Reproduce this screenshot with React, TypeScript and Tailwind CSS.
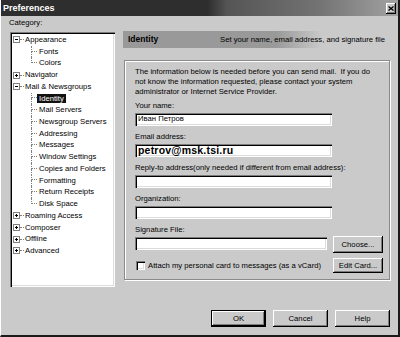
import React from "react";

type Node = { label: string; level: 0 | 1; exp?: "+" | "-"; last?: boolean; selected?: boolean };

const tree: Node[] = [
  { label: "Appearance", level: 0, exp: "-" },
  { label: "Fonts", level: 1 },
  { label: "Colors", level: 1, last: true },
  { label: "Navigator", level: 0, exp: "+" },
  { label: "Mail & Newsgroups", level: 0, exp: "-" },
  { label: "Identity", level: 1, selected: true },
  { label: "Mail Servers", level: 1 },
  { label: "Newsgroup Servers", level: 1 },
  { label: "Addressing", level: 1 },
  { label: "Messages", level: 1 },
  { label: "Window Settings", level: 1 },
  { label: "Copies and Folders", level: 1 },
  { label: "Formatting", level: 1 },
  { label: "Return Receipts", level: 1 },
  { label: "Disk Space", level: 1, last: true },
  { label: "Roaming Access", level: 0, exp: "+" },
  { label: "Composer", level: 0, exp: "+" },
  { label: "Offline", level: 0, exp: "+" },
  { label: "Advanced", level: 0, exp: "+" },
];

const raised =
  "bg-[#cacaca] shadow-[inset_-1px_-1px_0_#000,inset_1px_1px_0_#fff,inset_-2px_-2px_0_#7c7c7c]";
const sunken =
  "bg-white shadow-[inset_1px_1px_0_#7c7c7c,inset_2px_2px_0_#000,inset_-1px_-1px_0_#fff,inset_-2px_-2px_0_#dcdcdc]";

function Expander({ kind }: { kind: "+" | "-" }) {
  return (
    <svg width="7" height="7" viewBox="0 0 7 7" className="shrink-0">
      <rect x="0.5" y="0.5" width="6" height="6" fill="#fff" stroke="#808080" />
      <line x1="2" y1="3.5" x2="5" y2="3.5" stroke="#000" />
      {kind === "+" && <line x1="3.5" y1="2" x2="3.5" y2="5" stroke="#000" />}
    </svg>
  );
}

function TreeRow({ node }: { node: Node }) {
  if (node.level === 0) {
    return (
      <div className="flex h-[11.72px] items-center pl-[3px]">
        <Expander kind={node.exp ?? "+"} />
        <div className="ml-0 w-[4px] border-b border-dotted border-[#808080]" />
        <span className="ml-[1px] whitespace-nowrap">{node.label}</span>
      </div>
    );
  }
  return (
    <div className="flex h-[11.72px] items-stretch pl-[21px]">
      <div className="flex w-[6px] flex-col">
        <div className="h-1/2 border-b border-l border-dotted border-[#808080]" />
        <div className={node.last ? "flex-1" : "flex-1 border-l border-dotted border-[#808080]"} />
      </div>
      <div className="flex items-center">
        <span
          className={
            node.selected
              ? "whitespace-nowrap bg-[#111] px-[2px] leading-[9px] text-white"
              : "whitespace-nowrap px-[2px]"
          }
        >
          {node.label}
        </span>
      </div>
    </div>
  );
}

function Field({ label, value, bold }: { label: string; value?: string; bold?: boolean }) {
  return (
    <div className="mt-[6px]">
      <div className="h-[10px] whitespace-nowrap leading-[10px]">{label}</div>
      <div className={`mt-[2px] flex h-[13px] w-[197px] items-center pl-[3px] ${sunken}`}>
        <span
          className={
            bold
              ? "text-[10.5px] font-bold leading-none tracking-[0.2px]"
              : "leading-none"
          }
        >
          {value}
        </span>
      </div>
    </div>
  );
}

export default function App() {
  return (
    <div className="flex h-[337px] w-[400px] flex-col overflow-hidden border-b-2 border-l border-r-2 border-b-[#1a1a1a] border-l-white border-r-[#1a1a1a] bg-[#cacaca] font-['Liberation_Sans',Arial,sans-serif] text-[7.7px] text-black">
      {/* title bar */}
      <div className="flex h-[16px] shrink-0 items-center bg-[linear-gradient(to_right,#2e2e2e_0%,#2e2e2e_52%,#555_57%,#737373_80%,#a2a2a2_100%)] pl-[2px] pr-[2px]">
        <span className="text-[9px] font-bold leading-none text-white">Preferences</span>
        <div className={`ml-auto flex h-[11px] w-[10px] items-center justify-center ${raised}`}>
          <svg width="6" height="5" viewBox="0 0 6 5">
            <path d="M0.5 0.5 L5.5 4.5 M5.5 0.5 L0.5 4.5" stroke="#000" strokeWidth="1.3" />
          </svg>
        </div>
      </div>

      <div className="flex flex-1">
        {/* left: category tree */}
        <div className="w-[114px] shrink-0 pl-[9px]">
          <div className="ml-[-1px] mt-[2px] h-[10px] leading-[10px]">Category:</div>
          <div className={`mt-[4px] h-[255px] w-[105px] pt-[2px] ${sunken} leading-[11.72px]`}>
            {tree.map((n) => (
              <TreeRow key={n.label} node={n} />
            ))}
          </div>
        </div>

        {/* right: identity panel */}
        <div className="ml-[8px] flex flex-col">
          <div className="mt-[15px] flex h-[17px] w-[273px] items-center bg-[linear-gradient(to_right,#999_0%,#999_56%,#cacaca_73%)] pl-[5px]">
            <span className="text-[8.5px] font-bold leading-none">Identity</span>
            <span className="ml-auto mr-[11px] leading-none">Set your name, email address, and signature file</span>
          </div>

          <div className="ml-[1px] mt-[12px] h-[220px] w-[266px] border border-[#8a8a8a] pl-[10px] pt-[6px] shadow-[inset_1px_1px_0_#fff,1px_1px_0_#fff]">
            <p className="whitespace-nowrap leading-[10px]">
              The information below is needed before you can send mail.&nbsp; If you do
              <br />
              not know the information requested, please contact your system
              <br />
              administrator or Internet Service Provider.
            </p>
            <div className="-mt-[2.5px]">
              <Field label="Your name:" value="Иван Петров" />
            </div>
            <Field label="Email address:" value="petrov@msk.tsi.ru" bold />
            <Field label="Reply-to address(only needed if different from email address):" />
            <Field label="Organization:" />
            <div className="mt-[6px]">
              <div className="h-[10px] leading-[10px]">Signature File:</div>
              <div className="mt-[1.5px] flex items-start gap-[6px]">
                <div className={`mt-[0.5px] h-[13px] w-[192px] ${sunken}`} />
                <button className={`h-[17px] w-[50px] leading-none ${raised}`}>Choose...</button>
              </div>
            </div>
            <div className="mt-[5px] flex w-[248px] items-center">
              <div className={`ml-[1px] h-[9px] w-[9px] ${sunken}`} />
              <span className="ml-[3px] whitespace-nowrap">Attach my personal card to messages (as a vCard)</span>
              <button className={`ml-auto h-[15px] w-[50px] leading-none ${raised}`}>Edit Card...</button>
            </div>
          </div>
        </div>
      </div>

      {/* dialog buttons */}
      <div className="flex shrink-0 justify-end gap-[7px] pb-[8px] pr-[8px]">
        <button className={`h-[17px] w-[55px] border border-black leading-none ${raised}`}>OK</button>
        <button className={`h-[17px] w-[55px] leading-none ${raised}`}>Cancel</button>
        <button className={`h-[17px] w-[55px] leading-none ${raised}`}>Help</button>
      </div>
    </div>
  );
}
